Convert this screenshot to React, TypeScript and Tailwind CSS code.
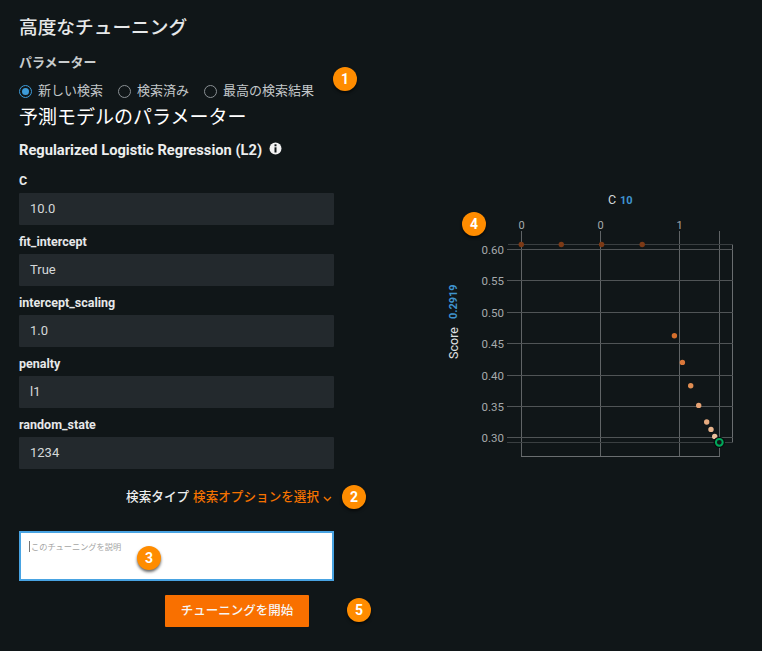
import React from "react";

const fields = [
  ["C", "10.0"],
  ["fit_intercept", "True"],
  ["intercept_scaling", "1.0"],
  ["penalty", "l1"],
  ["random_state", "1234"],
];

function Badge({ n, className }: { n: string; className: string }) {
  return (
    <div
      className={
        "absolute flex h-6 w-6 items-center justify-center rounded-full bg-[#ff8c00] text-[14px] font-bold text-white shadow-[0_2px_3px_rgba(0,0,0,0.6)] " +
        className
      }
    >
      {n}
    </div>
  );
}

function Radio({ on, label }: { on?: boolean; label: string }) {
  return (
    <div className="flex items-center gap-[6px]">
      <span
        className={
          "flex h-[13px] w-[13px] items-center justify-center rounded-full border " +
          (on ? "border-[#3d9bd9]" : "border-[#8a9094]")
        }
      >
        {on && <span className="h-[7px] w-[7px] rounded-full bg-[#3d9bd9]" />}
      </span>
      <span className="text-[13px] leading-[16px] text-[#c4c8ca]">{label}</span>
    </div>
  );
}

function Chart() {
  const hs: [number, string][] = [
    [249.5, "0.60"],
    [280.5, "0.55"],
    [312.5, "0.50"],
    [343.5, "0.45"],
    [375.5, "0.40"],
    [406.5, "0.35"],
    [437.5, "0.30"],
  ];
  const vs: [number, string][] = [
    [521.5, "0"],
    [600.5, "0"],
    [679.5, "1"],
  ];
  const dots: [number, number, string][] = [
    [521.3, 244.5, "#7c3a16"],
    [561.3, 244.5, "#7c3a16"],
    [601.6, 244.5, "#7c3a16"],
    [642.2, 244.5, "#7c3a16"],
    [674.4, 335.7, "#d56f2c"],
    [682.4, 362.4, "#d9773a"],
    [690.7, 385.7, "#e08d52"],
    [698.7, 405.4, "#e5a274"],
    [706.7, 422, "#e6ab80"],
    [711, 429.4, "#e8b48c"],
    [714.7, 436.4, "#ebbf9c"],
  ];
  return (
    <svg
      width={322}
      height={290}
      viewBox="430 180 322 290"
      className="ml-[96px] mt-[180px] shrink-0"
      fontFamily="Roboto, sans-serif"
    >
      <text x={608} y={204} fontSize={12.5} fill="#d5d8d9">C</text>
      <text x={620} y={204} fontSize={11} fontWeight={700} fill="#3f94cf">10</text>
      <text
        transform="translate(457.5,343) rotate(-90)"
        fontSize={12.5}
        fill="#e0e2e3"
        textAnchor="middle"
      >
        Score
      </text>
      <text
        transform="translate(457,301.7) rotate(-90)"
        fontSize={11}
        fontWeight={700}
        fill="#3f94cf"
        textAnchor="middle"
      >
        0.2919
      </text>
      {vs.map(([x, t]) => (
        <g key={x}>
          <line x1={x} x2={x} y1={231} y2={456.5} stroke="#606466" />
          <text x={x} y={229} fontSize={11} fill="#a6aaac" textAnchor="middle">{t}</text>
        </g>
      ))}
      <line x1={719.5} x2={719.5} y1={231} y2={456.5} stroke="#606466" />
      <line x1={732.5} x2={732.5} y1={244.5} y2={442.5} stroke="#6a6e70" />
      <line x1={521} x2={720} y1={456.5} y2={456.5} stroke="#6a6e70" />
      <line x1={508} x2={733} y1={244.5} y2={244.5} stroke="#3a3f41" />
      <line x1={507} x2={733} y1={442.5} y2={442.5} stroke="#3a3f41" />
      {hs.map(([y, t]) => (
        <g key={y}>
          <line x1={507} x2={733} y1={y} y2={y} stroke="#505456" />
          <text x={504} y={y + 4} fontSize={11.5} fill="#a6aaac" textAnchor="end">{t}</text>
        </g>
      ))}
      {dots.map(([x, y, c]) => (
        <circle key={x} cx={x} cy={y} r={2.7} fill={c} />
      ))}
      <circle cx={719.3} cy={442.3} r={5.6} fill="#0a0c0d" />
      <circle cx={719.3} cy={442.3} r={3.4} fill="#101618" stroke="#00a85a" strokeWidth={2} />
    </svg>
  );
}

export default function App() {
  return (
    <div className="relative flex h-[651px] w-[762px] overflow-hidden bg-[#101618] font-['Roboto','Noto_Sans_CJK_JP',sans-serif] text-white">
      <div className="flex w-[334px] shrink-0 flex-col pl-[19px]">
        <h1 className="mt-[16px] text-[18.7px] font-medium leading-[24px] text-[#e6e8e9]">高度なチューニング</h1>
        <div className="mt-[14px] text-[13px] font-bold leading-[18px] text-[#c8cccd]">パラメーター</div>
        <div className="mt-[11px] flex gap-[15px]">
          <Radio on label="新しい検索" />
          <Radio label="検索済み" />
          <Radio label="最高の検索結果" />
        </div>
        <h2 className="mt-[6px] text-[19px] font-normal leading-[26px] text-white">予測モデルのパラメーター</h2>
        <div className="mt-[10px] flex items-center gap-[7px]">
          <span className="text-[14.7px] font-bold leading-[18px] text-[#eceeee]">Regularized Logistic Regression (L2)</span>
          <svg width="13" height="13" viewBox="0 0 13 13" className="-mt-[3px]">
            <circle cx="6.5" cy="6.5" r="6" fill="#f2f2f2" />
            <rect x="5.5" y="2.3" width="2" height="2" fill="#101618" />
            <rect x="5.5" y="5.3" width="2" height="5.2" fill="#101618" />
          </svg>
        </div>
        <div className="mt-[15px] flex flex-col gap-[10px]">
          {fields.map(([k, v]) => (
            <div key={k} className="flex flex-col gap-[5px]">
              <div className="text-[12.5px] font-bold leading-[14px] text-[#e6e8e9]">{k}</div>
              <div className="flex h-[32px] w-[315px] items-center rounded-[1px] bg-[#23292d] pl-[11px] text-[13px] text-[#d5d8d9]">
                {v}
              </div>
            </div>
          ))}
        </div>
        <div className="mr-[2px] mt-[19px] flex items-center justify-end text-[12.6px] font-medium leading-[18px]">
          <span className="text-[#eceeee]">検索タイプ</span>
          <span className="ml-[4px] text-[#f57200]">検索オプションを選択</span>
          <svg width="9" height="6" viewBox="0 0 9 6" className="ml-[4px] mt-[3px]">
            <path d="M1 1 L4.5 4.5 L8 1" fill="none" stroke="#f57200" strokeWidth="1.4" />
          </svg>
        </div>
        <div className="mt-[25px] h-[50px] w-[315px] border-2 border-[#48a3e2] bg-white pl-[8px] pt-[8px]">
          <div className="flex items-center gap-[1px] text-[8.2px] leading-[10px] text-[#a4a4a4]">
            <span className="h-[11px] w-[1px] bg-[#777]" />
            このチューニングを説明
          </div>
        </div>
        <button className="ml-[146px] mt-[14px] h-[32px] w-[144px] rounded-[1px] bg-[#f97000] text-[12.5px] font-medium text-[#f6f6f6]">
          チューニングを開始
        </button>
      </div>
      <Chart />
      <Badge n="1" className="left-[333px] top-[67px]" />
      <Badge n="2" className="left-[342px] top-[485px]" />
      <Badge n="3" className="left-[137px] top-[546px]" />
      <Badge n="4" className="left-[462px] top-[212px]" />
      <Badge n="5" className="left-[347px] top-[598px]" />
    </div>
  );
}
